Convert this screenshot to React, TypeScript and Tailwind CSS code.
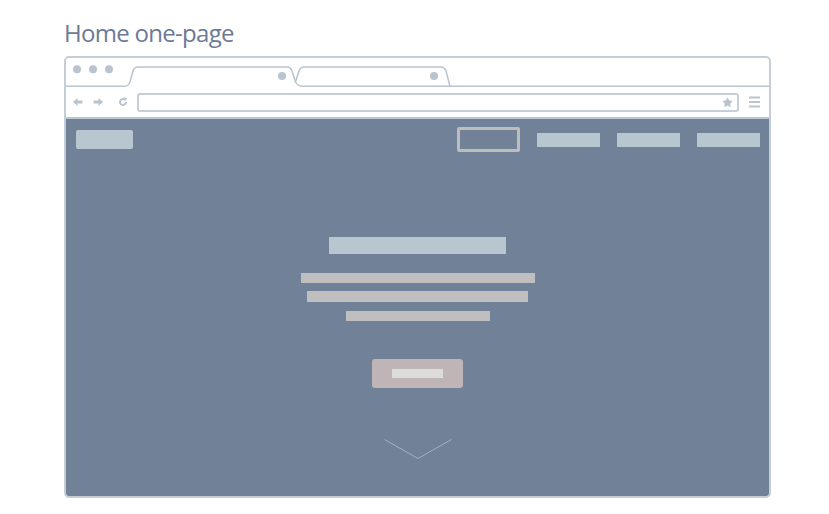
import { Star } from 'lucide-react';

const chrome = '#b9c4cf';

function TabStrip() {
    return (
        <svg width="703" height="29" viewBox="66 58 703 29" className="block">
            <circle cx="77" cy="69.3" r="4" fill={chrome} />
            <circle cx="93" cy="69.3" r="4" fill={chrome} />
            <circle cx="109" cy="69.3" r="4" fill={chrome} />
            <path
                d="M66 86.25 H124 C128 86.25 129 85 130 82 L133 71 C134 68 135 67 138 67 H287 C290 67 291 68 292 71 L295.5 82 C297 85 299 86.25 303 86.25 H769"
                fill="none"
                stroke={chrome}
                strokeWidth="1.5"
            />
            <path d="M295.5 82 L299 71 C300 68 301 67 304 67 H441 C444 67 445 68 446 71 L450 86.25" fill="none" stroke={chrome} strokeWidth="1.5" />
            <circle cx="282" cy="76" r="4" fill={chrome} />
            <circle cx="434" cy="76" r="4" fill={chrome} />
        </svg>
    );
}

function AddressRow() {
    return (
        <div className="flex h-[30px] items-center">
            <svg width="10" height="8" viewBox="0 0 10 8" className="ml-[7px]">
                <path d="M0 4 L4.5 0 V2.5 H9.5 V5.5 H4.5 V8 Z" fill={chrome} />
            </svg>
            <svg width="10" height="8" viewBox="0 0 10 8" className="ml-[10px]">
                <path d="M10 4 L5.5 0 V2.5 H0.5 V5.5 H5.5 V8 Z" fill={chrome} />
            </svg>
            <svg width="10" height="10" viewBox="0 0 10 10" className="ml-[15px]">
                <path d="M8 5 A3 3 0 1 1 6.6 2.4" fill="none" stroke={chrome} strokeWidth="2" />
                <path d="M5.2 0.2 L9.2 1.2 L7 4.5 Z" fill={chrome} />
            </svg>
            <div className="ml-[9px] flex h-[19px] w-[602px] items-center justify-end rounded-[3px] border-2 border-[#c6cfd8] pr-[4px]">
                <Star size={11} fill={chrome} stroke={chrome} strokeWidth={1} />
            </div>
            <svg width="11" height="12" viewBox="0 0 11 12" className="ml-[10px]">
                <rect x="0" y="0.5" width="11" height="2" fill={chrome} />
                <rect x="0" y="5" width="11" height="2" fill={chrome} />
                <rect x="0" y="9.5" width="11" height="2" fill={chrome} />
            </svg>
        </div>
    );
}

export default function App() {
    return (
        <div className="min-h-screen w-[829px] bg-white pl-[64px] pt-[17px]">
            <h1 className="text-[24px] leading-[32px] font-normal tracking-[-0.7px] text-[#6c7a95]" style={{ fontFamily: '"Open Sans", sans-serif' }}>
                Home one-page
            </h1>
            <div className="mt-[7px] flex h-[442px] w-[707px] flex-col overflow-hidden rounded-[5px] border-2 border-[#c5ced7]">
                <TabStrip />
                <AddressRow />
                <div className="flex flex-1 flex-col items-center border-t-2 border-[#bcc6d0] bg-[#718197]">
                    <div className="mt-[8px] flex h-[25px] w-full items-center justify-between pl-[10px] pr-[9px]">
                        <div className="h-[19px] w-[57px] rounded-[2px] bg-[#b8c6cf]" />
                        <div className="flex items-center gap-[17px]">
                            <div className="h-[25px] w-[63px] rounded-[2px] border-[3px] border-[#bdbdbd]" />
                            <div className="h-[14px] w-[63px] bg-[#b8c6cf]" />
                            <div className="h-[14px] w-[63px] bg-[#b8c6cf]" />
                            <div className="h-[14px] w-[63px] bg-[#b8c6cf]" />
                        </div>
                    </div>
                    <div className="mt-[85px] h-[17px] w-[177px] bg-[#b8c6cf]" />
                    <div className="mt-[19px] h-[10px] w-[234px] bg-[#bfbfbf]" />
                    <div className="mt-[8px] h-[11px] w-[221px] bg-[#bfbfbf]" />
                    <div className="mt-[9px] h-[10px] w-[144px] bg-[#bfbfbf]" />
                    <div className="mt-[38px] flex h-[29px] w-[91px] items-center justify-center rounded-[3px] bg-[#bfb5b6]">
                        <div className="h-[9px] w-[51px] bg-[#dcdcdc]" />
                    </div>
                    <svg width="68" height="21" viewBox="0 0 68 21" className="mt-[51px]">
                        <path d="M0.5 0.5 L34 19.5 L67.5 0.5" fill="none" stroke="#a6b0bf" strokeWidth="1" />
                    </svg>
                </div>
            </div>
        </div>
    );
}
